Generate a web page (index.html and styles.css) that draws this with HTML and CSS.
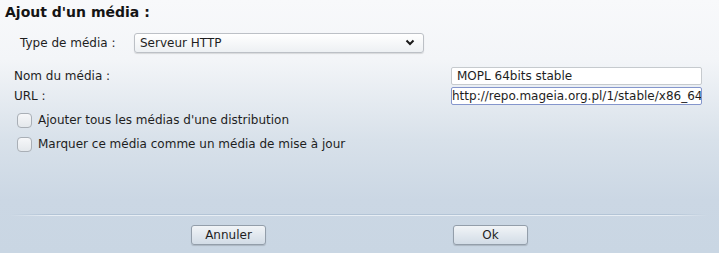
FILE: index.html
```html
<!DOCTYPE html>
<html lang="fr">
<head>
  <meta charset="UTF-8" />
  <title>Ajout d'un média</title>
  <link rel="stylesheet" href="styles.css">
</head>
<body>
  <div class="dialog">
    <h1 class="title">Ajout d'un média :</h1>

    <div class="type-row">
      <span class="type-label">Type de média :</span>
      <div class="select">
        <span>Serveur HTTP</span>
        <svg class="chevron" width="10" height="7" viewBox="0 0 10 7">
          <path d="M1.5 1.5 L5 5 L8.5 1.5" fill="none" stroke="#1a1a1a" stroke-width="2"/>
        </svg>
      </div>
    </div>

    <div class="field-row first">
      <span class="field-label">Nom du média :</span>
      <div class="input">MOPL 64bits stable</div>
    </div>
    <div class="field-row">
      <span class="field-label">URL :</span>
      <div class="input focused">http://repo.mageia.org.pl/1/stable/x86_64<span class="caret"></span></div>
    </div>

    <label class="check first">
      <span class="box"></span>
      Ajouter tous les médias d'une distribution
    </label>
    <label class="check">
      <span class="box"></span>
      Marquer ce média comme un média de mise à jour
    </label>

    <div class="spacer"></div>
    <div class="separator"></div>

    <div class="buttons">
      <button class="btn cancel">Annuler</button>
      <button class="btn ok">Ok</button>
    </div>
  </div>
</body>
</html>
```

FILE: styles.css
```css
* {
  margin: 0;
  padding: 0;
  box-sizing: border-box;
}

body {
  width: 719px;
  height: 253px;
  overflow: hidden;
  font-family: "DejaVu Sans", sans-serif;
  font-size: 12px;
  color: #1e1e1e;
  background: linear-gradient(to bottom, #f8f9fb 0, #f3f5f8 60px, #d8e1ea 140px, #cbd7e4 200px, #c9d6e3 253px);
}

.dialog {
  height: 253px;
  display: flex;
  flex-direction: column;
}

.title {
  font-size: 14px;
  font-weight: bold;
  color: #141414;
  padding: 3px 0 0 5px;
  height: 24px;
  line-height: 18px;
}

.type-row {
  display: flex;
  align-items: center;
  height: 27px;
  margin-top: 5px;
}

.type-label {
  width: 134px;
  padding-left: 20px;
}

.select {
  width: 290px;
  height: 20px;
  display: flex;
  align-items: center;
  justify-content: space-between;
  padding: 0 8px 0 5px;
  border: 1px solid #bcc0c6;
  border-radius: 3px;
  background: linear-gradient(to bottom, #ffffff, #edf0f3);
  box-shadow: 0 1px 1px rgba(0, 0, 0, 0.12);
}

.field-row {
  display: flex;
  align-items: center;
  height: 19px;
  margin-top: 1px;
}

.field-row.first {
  margin-top: 10px;
}

.field-label {
  width: 451px;
  padding-left: 14px;
}

.input {
  width: 251px;
  height: 18px;
  line-height: 16px;
  padding-left: 5px;
  border: 1px solid #c6cace;
  border-radius: 2px;
  background: #fff;
  white-space: nowrap;
  overflow: hidden;
}

.input.focused {
  padding-left: 0;
  border-color: #8596cc;
  display: flex;
  align-items: center;
}

.caret {
  display: inline-block;
  width: 1px;
  height: 14px;
  margin-left: 1px;
  background: #111;
}

.check {
  display: flex;
  align-items: center;
  gap: 6px;
  height: 24px;
  padding-left: 17px;
}

.check.first {
  margin-top: 3px;
}

.box {
  width: 15px;
  height: 15px;
  border: 1px solid #a9afb6;
  border-radius: 4px;
  background: linear-gradient(to bottom, #f6f7f9, #e4e8ec);
}

.spacer {
  flex: 1;
}

.separator {
  height: 2px;
  margin: 0 12px 8px 10px;
  background:
    linear-gradient(to right, rgba(203,215,228,1), rgba(203,215,228,0) 40px, rgba(203,215,228,0) calc(100% - 40px), rgba(203,215,228,1)),
    linear-gradient(to bottom, #b3c4d6 0 1px, #e8eef4 1px 2px);
}

.buttons {
  display: flex;
  height: 29px;
  padding-top: 1px;
}

.btn {
  width: 75px;
  height: 20px;
  font-family: "DejaVu Sans", sans-serif;
  font-size: 12px;
  color: #1e1e1e;
  border: 1px solid #939eaa;
  border-radius: 3px;
  background: linear-gradient(to bottom, #f1f4f7, #d2dce6);
  box-shadow: 0 1px 1px rgba(0, 0, 0, 0.15);
}

.cancel {
  margin-left: 191px;
}

.ok {
  margin-left: 187px;
}
```
